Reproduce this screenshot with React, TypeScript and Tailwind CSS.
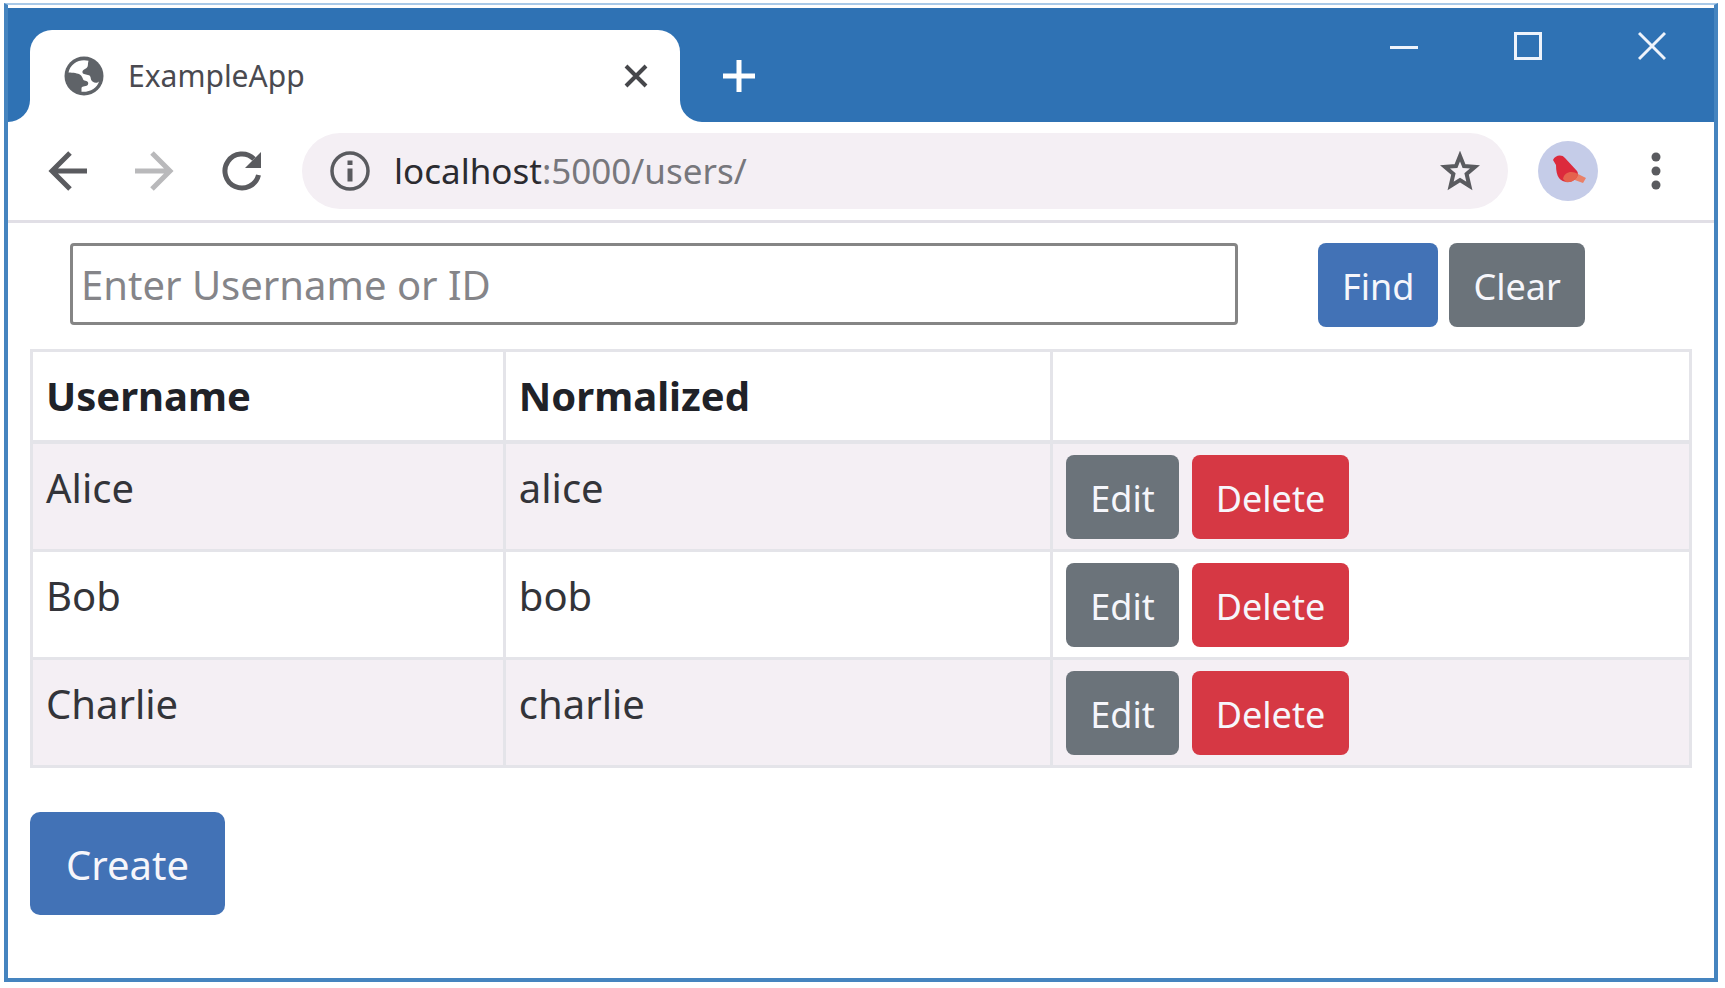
import React from "react";

const users = [
  { id: 1, username: "Alice", normalized: "alice" },
  { id: 2, username: "Bob", normalized: "bob" },
  { id: 3, username: "Charlie", normalized: "charlie" },
];

function GlobeIcon() {
  return (
    <svg viewBox="0 0 40 40" className="size-10 shrink-0" aria-hidden="true">
      <circle cx="20" cy="20" r="19.5" fill="#5f6368" />
      <path
        d="M24.500 4.800 C16 2.500 6.500 7 4.500 16.500 C9 16.800 14 17 16.500 19 C19 21 18.500 24 20.500 24.500 C23 25 25 26 24 28.500 C23 31 18 29.500 17.500 32 L17.500 35.800 C26 36.500 33 32 35 25.500 C33 27.500 30.500 27 28.500 25.500 C26 24 27.500 20.500 25 19.300 C22.500 18.500 19 18.500 18.500 16.500 C18 14 21 13.500 23 11.500 C24.500 10 23.500 8 24.500 4.800 Z"
        fill="#fff"
      />
    </svg>
  );
}

function TabCorner({ side }: { side: "left" | "right" }) {
  return (
    <svg viewBox="0 0 22 22" className="h-[22px] w-[22px] shrink-0 self-end" aria-hidden="true">
      <path d={side === "left" ? "M22 0 V22 H0 A22 22 0 0 0 22 0 Z" : "M0 0 V22 H22 A22 22 0 0 1 0 0 Z"} fill="#fff" />
    </svg>
  );
}

const stroke = { fill: "none", stroke: "currentColor" } as const;

function TitleBar() {
  return (
    <header className="flex h-[114px] bg-[#2f72b4] pt-[22px]">
      <TabCorner side="left" />
      <div className="flex min-w-0 basis-[650px] items-center rounded-t-[22px] bg-white pr-6 pl-[34px]">
        <GlobeIcon />
        <span className="ml-6 grow text-[30px] leading-12 whitespace-nowrap text-[#4a4a50]">ExampleApp</span>
        <button type="button" aria-label="Close tab" className="p-1 text-[#46474b]">
          <svg viewBox="0 0 32 32" className="size-8" {...stroke} strokeWidth="4">
            <path d="M6 6 L26 26 M26 6 L6 26" />
          </svg>
        </button>
      </div>
      <TabCorner side="right" />
      <button type="button" aria-label="New tab" className="ml-5 self-center text-white">
        <svg viewBox="0 0 34 34" className="size-[34px]" {...stroke} strokeWidth="5">
          <path d="M17 1 V33 M1 17 H33" />
        </svg>
      </button>
      <div className="mr-12 ml-auto flex items-start gap-24 text-[#eef3fb]">
        <button type="button" aria-label="Minimize">
          <svg viewBox="0 0 28 32" className="h-8 w-7" {...stroke} strokeWidth="3">
            <path d="M0 17.500 H28" />
          </svg>
        </button>
        <button type="button" aria-label="Maximize">
          <svg viewBox="0 0 28 32" className="h-8 w-7" {...stroke} strokeWidth="3">
            <rect x="1.500" y="3.500" width="25" height="25" />
          </svg>
        </button>
        <button type="button" aria-label="Close window">
          <svg viewBox="0 0 28 32" className="h-8 w-7" {...stroke} strokeWidth="3">
            <path d="M1 3 L27 29 M27 3 L1 29" />
          </svg>
        </button>
      </div>
    </header>
  );
}

function Toolbar() {
  return (
    <div className="flex h-[101px] items-center border-b-3 border-[#e1dfe6] pr-[38px] pl-10 text-[#5a5b5f]">
      <button type="button" aria-label="Back">
        <svg viewBox="0 0 40 40" className="size-10" {...stroke} strokeWidth="5">
          <path d="M39 20 H4 M22 2 L4 20 L22 38" />
        </svg>
      </button>
      <button type="button" aria-label="Forward" className="ml-[47px] text-[#b9b9bb]">
        <svg viewBox="0 0 40 40" className="size-10" {...stroke} strokeWidth="5">
          <path d="M0 20 H35 M17 2 L35 20 L17 38" />
        </svg>
      </button>
      <button type="button" aria-label="Reload" className="ml-[47px]">
        <svg viewBox="0 0 40 40" className="size-10" {...stroke} strokeWidth="5">
          <path d="M36.500 24 A17 17 0 1 1 32 8" />
          <path d="M39 1 V17 H23 Z" fill="currentColor" stroke="none" />
        </svg>
      </button>
      <div className="ml-10 flex h-[76px] min-w-0 grow items-center rounded-full bg-[#f4eff4] px-7">
        <svg viewBox="0 0 40 40" className="size-10 shrink-0" {...stroke} strokeWidth="3.500" aria-hidden="true">
          <circle cx="20" cy="20" r="18" />
          <path d="M20 17.500 V30.500 M20 9.500 V14" strokeWidth="5" />
        </svg>
        <div className="ml-6 grow truncate text-[35px] leading-12 text-[#77777c]">
          <span className="text-[#2b2b30]">localhost</span>:5000/users/
        </div>
        <button type="button" aria-label="Bookmark this page">
          <svg viewBox="0 0 40 40" className="size-10" {...stroke} strokeWidth="4">
            <path d="M20 5 L24 15 L35 15.800 L26.600 23 L29.400 35 L20 29 L10.600 35 L13.400 23 L5 15.800 L16 15 Z" />
          </svg>
        </button>
      </div>
      <button type="button" aria-label="Profile" className="ml-[30px]">
        <svg viewBox="0 0 60 60" className="size-[60px]">
          <circle cx="30" cy="30" r="30" fill="#c5cce8" />
          <path d="M36 31 L48 37 L45 42 L34 38 Z" fill="#ea8068" />
          <path d="M15 19 C17 14 24 13 27 17 L39 30 C42 34 37 41 30 41 C22 41 18 36 18 24 Z" fill="#dc2a3c" />
          <path d="M25 38 C26 31 34 29 40 33 C39 39 33 42 28 41 Z" fill="#e5624e" />
        </svg>
      </button>
      <button type="button" aria-label="Menu" className="ml-[38px]">
        <svg viewBox="0 0 40 40" className="size-10" fill="currentColor">
          <circle cx="20" cy="6" r="4.500" />
          <circle cx="20" cy="20" r="4.500" />
          <circle cx="20" cy="34" r="4.500" />
        </svg>
      </button>
    </div>
  );
}

const smallButton = "h-[84px] rounded-lg px-6 pt-1 text-[36px] leading-12 text-[#f6f6fb]";

export default function App() {
  return (
    <div className="min-h-screen bg-white pt-[3px] pr-[7px] pb-[6px] pl-1 font-['Noto_Sans','Open_Sans',sans-serif] text-[#333439]">
      <div className="flex min-h-[979px] flex-col border-4 border-t-2 border-[#4584bf] border-t-[#a9c9e8] pt-[3px]">
        <TitleBar />
        <Toolbar />
        <main className="px-[22px] pt-5 pb-14">
          <form className="flex items-start pl-10" onSubmit={(e) => e.preventDefault()}>
            <input
              type="text"
              aria-label="Username or ID"
              placeholder="Enter Username or ID"
              className="h-[82px] min-w-0 basis-[1168px] rounded-[4px] border-3 border-[#858585] px-2 text-[40px] leading-12 placeholder:text-[#858589]"
            />
            <div className="ml-20 flex gap-[11px]">
              <button type="submit" className={`${smallButton} bg-[#4272b6]`}>Find</button>
              <button type="reset" className={`${smallButton} bg-[#6b737a]`}>Clear</button>
            </div>
          </form>
          <table className="mt-[22px] w-full table-fixed border-collapse text-left text-[40px] leading-[60px]">
            <colgroup>
              <col className="w-[28.500%]" />
              <col className="w-[33%]" />
              <col />
            </colgroup>
            <thead>
              <tr className="h-[91px] [&>th]:border-3 [&>th]:border-b-4 [&>th]:border-[#e4e4e9] [&>th]:px-[13px] [&>th]:font-bold [&>th]:text-[#202228]">
                <th scope="col">Username</th>
                <th scope="col">Normalized</th>
                <th scope="col" aria-label="Actions" />
              </tr>
            </thead>
            <tbody>
              {users.map((u) => (
                <tr key={u.id} className="odd:bg-[#f4eff4] [&>td]:border-3 [&>td]:border-[#e4e4e9] [&>td]:px-[13px] [&>td]:align-top">
                  <td className="pt-[14px]">{u.username}</td>
                  <td className="pt-[14px]">{u.normalized}</td>
                  <td>
                    <div className="flex gap-[13px] pt-[11px] pb-[10px]">
                      <button type="button" className={`${smallButton} bg-[#6b737a]`}>Edit</button>
                      <button type="button" className={`${smallButton} bg-[#d63844]`}>Delete</button>
                    </div>
                  </td>
                </tr>
              ))}
            </tbody>
          </table>
          <button type="button" className="mt-11 h-[103px] rounded-[10px] bg-[#4272b6] px-9 pt-1 text-[40px] leading-[60px] text-[#f6f6fb]">
            Create
          </button>
        </main>
      </div>
    </div>
  );
}
